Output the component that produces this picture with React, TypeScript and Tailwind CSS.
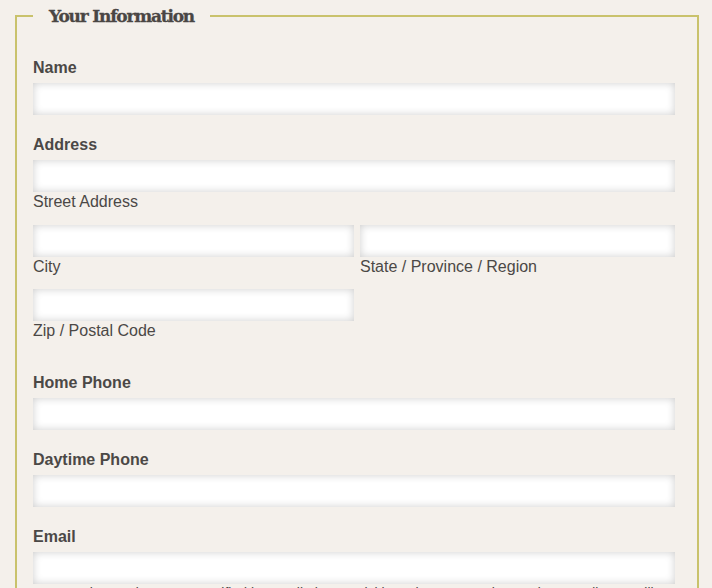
import React from "react";

const inputCls =
  "block h-[32px] w-full bg-white shadow-[inset_0_0_9px_rgba(0,0,0,0.2)] outline-none border-0";

function Label({ children }: { children: React.ReactNode }) {
  return (
    <label className="block text-[16px] leading-[20px] font-bold text-[#4b4846] mb-[5px]">
      {children}
    </label>
  );
}

function Sub({ children }: { children: React.ReactNode }) {
  return <div className="text-[16px] leading-[20px] text-[#4b4846]">{children}</div>;
}

export default function App() {
  return (
    <div
      className="min-h-[588px] w-[712px] bg-[#f4f0eb] pl-[15px] pr-[13px] pt-[4px] overflow-hidden"
      style={{ fontFamily: '"Liberation Sans", Arial, sans-serif' }}
    >
      <fieldset className="border-2 border-[#c9c26c] pl-[16px] pr-[22px] pt-[30px] pb-[20px]">
        <legend
          className="px-4 text-[17px] leading-[24px] font-bold text-[#4a4644] tracking-[-1.2px]"
          style={{ fontFamily: '"DejaVu Serif", serif', WebkitTextStroke: "0.3px #4a4644" }}
        >
          Your Information
        </legend>

        <div className="flex flex-col gap-[20px]">
          <div>
            <Label>Name</Label>
            <input className={inputCls} />
          </div>

          <div>
            <Label>Address</Label>
            <div className="mb-[13px]">
              <input className={inputCls} />
              <Sub>Street Address</Sub>
            </div>
            <div className="grid grid-cols-[321px_1fr] gap-x-[6px] mb-[12px]">
              <div>
                <input className={inputCls} />
                <Sub>City</Sub>
              </div>
              <div>
                <input className={inputCls} />
                <Sub>State / Province / Region</Sub>
              </div>
            </div>
            <div className="grid grid-cols-[321px_1fr] gap-x-[6px] mb-[12px]">
              <div>
                <input className={inputCls} />
                <Sub>Zip / Postal Code</Sub>
              </div>
            </div>
          </div>

          <div>
            <Label>Home Phone</Label>
            <input className={inputCls} />
          </div>

          <div>
            <Label>Daytime Phone</Label>
            <input className={inputCls} />
          </div>

          <div>
            <Label>Email</Label>
            <input className={inputCls} />
            <div className="text-[14px] leading-[18px] text-[#4b4846]">
              Community Gardeners are notified by email about activities. The Community Garden coordinator will email you.
            </div>
          </div>
        </div>
      </fieldset>
    </div>
  );
}
